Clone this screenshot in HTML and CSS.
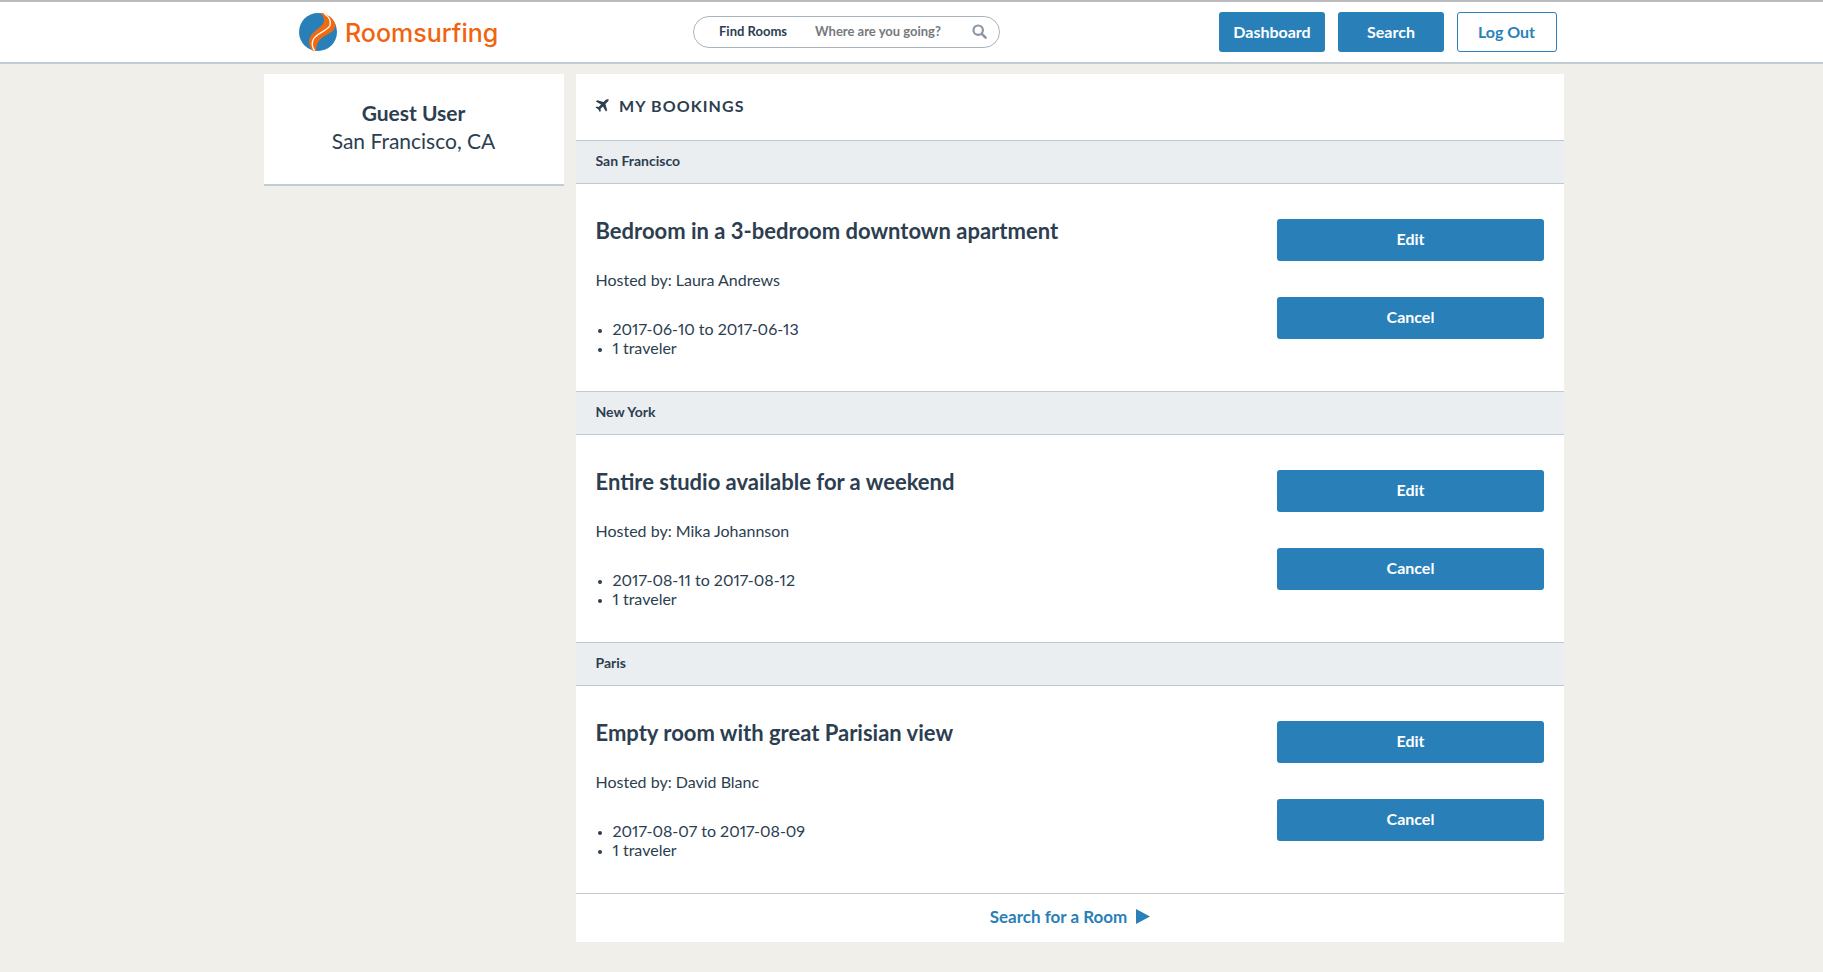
FILE: index.html
```html
<!DOCTYPE html>
<html lang="en">
<head>
<meta charset="utf-8">
<title>Roomsurfing</title>
<link rel="stylesheet" href="styles.css">
</head>
<body>
<header class="topbar">
  <div class="logo">
    <svg class="logo-mark" width="38" height="38" viewBox="0 0 38 38">
      <circle cx="19" cy="19" r="19" fill="#2980b9"/>
      <path d="M21 0C28 0.500 35 5 36.500 12C36.500 18 29 21 24 24C20 27 17 31 17 38L13.500 37.500C9.500 33 9 27 12 22.500C15 17.500 23.500 14 25 8.500C25.500 5 24 2 21 0Z" fill="#f26a10"/>
      <path d="M25.500 1C30 3.500 32.500 8.500 31 12.500C28.500 18 18.500 19.500 14.500 26C12.500 30 13 34 15.500 37.500" fill="none" stroke="#fff" stroke-width="1.3"/>
    </svg>
    <span class="logo-text">Roomsurfing</span>
  </div>
  <div class="search-pill">
    <span class="pill-label">Find Rooms</span>
    <span class="pill-placeholder">Where are you going?</span>
    <svg class="pill-icon" width="15" height="15" viewBox="0 0 15 15">
      <circle cx="6.2" cy="6.2" r="4.7" fill="none" stroke="#8a97a5" stroke-width="2.2"/>
      <path d="M9.8 9.8L13.6 13.6" stroke="#8a97a5" stroke-width="2.6" stroke-linecap="round"/>
    </svg>
  </div>
  <nav class="top-actions">
    <a class="btn btn-top">Dashboard</a>
    <a class="btn btn-top">Search</a>
    <a class="btn-outline">Log Out</a>
  </nav>
</header>
<div class="layout">
  <aside class="profile">
    <div class="profile-name">Guest User</div>
    <div class="profile-place">San Francisco, CA</div>
  </aside>
  <main class="bookings">
    <h1 class="bookings-title">
      <svg class="plane" width="14" height="14" viewBox="0 0 14 14">
        <path d="M13.6 0.5C12.7-0.1 11.4 0.2 10.5 1.1L8.6 3L2.2 1.2L0.9 2.5L6.1 5.4L3.7 7.9L1.6 7.6L0.6 8.6L3.2 10.2L4.8 12.9L5.8 11.9L5.500 9.8L8 7.4L10.9 12.6L12.2 11.3L10.4 4.9L12.4 2.9C13.3 2 13.9 1.3 13.6 0.5Z" fill="#2c3e50"/>
      </svg>
      MY BOOKINGS
    </h1>
    <section>
      <h2 class="city">San Francisco</h2>
      <div class="booking">
        <div class="booking-info">
          <h3 class="booking-title">Bedroom in a 3-bedroom downtown apartment</h3>
          <p class="host">Hosted by: Laura Andrews</p>
          <ul class="details"><li>2017-06-10 to 2017-06-13</li><li>1 traveler</li></ul>
        </div>
        <div class="booking-actions">
          <a class="btn btn-wide">Edit</a>
          <a class="btn btn-wide">Cancel</a>
        </div>
      </div>
    </section>
    <section>
      <h2 class="city">New York</h2>
      <div class="booking">
        <div class="booking-info">
          <h3 class="booking-title">Entire studio available for a weekend</h3>
          <p class="host">Hosted by: Mika Johannson</p>
          <ul class="details"><li>2017-08-11 to 2017-08-12</li><li>1 traveler</li></ul>
        </div>
        <div class="booking-actions">
          <a class="btn btn-wide">Edit</a>
          <a class="btn btn-wide">Cancel</a>
        </div>
      </div>
    </section>
    <section>
      <h2 class="city">Paris</h2>
      <div class="booking">
        <div class="booking-info">
          <h3 class="booking-title">Empty room with great Parisian view</h3>
          <p class="host">Hosted by: David Blanc</p>
          <ul class="details"><li>2017-08-07 to 2017-08-09</li><li>1 traveler</li></ul>
        </div>
        <div class="booking-actions">
          <a class="btn btn-wide">Edit</a>
          <a class="btn btn-wide">Cancel</a>
        </div>
      </div>
    </section>
    <a class="more">Search for a Room<svg class="more-arrow" width="14" height="15" viewBox="0 0 14 15"><path d="M0 0L14 7.500L0 15Z" fill="#2980b9"/></svg></a>
  </main>
</div>
</body>
</html>
```
FILE: styles.css
```css
* { box-sizing: border-box; }
html, body { margin: 0; padding: 0; }
body {
  height: 972px;
  overflow: hidden;
  background: #f0efea;
  color: #2c3e50;
  font-family: Lato, "Liberation Sans", sans-serif;
  font-size: 16px;
}
.topbar {
  height: 64px;
  background: #fff;
  border-top: 2px solid #b8babb;
  border-bottom: 2px solid #c1cdd5;
  display: flex;
  align-items: center;
  padding-left: 299px;
}
.logo { display: flex; align-items: center; width: 394px; }
.logo-mark { flex: none; }
.logo-text {
  margin-left: 8px;
  padding-top: 2px;
  font-family: Inter, sans-serif;
  font-size: 25px;
  font-weight: 500;
  color: #f0640f;
}
.search-pill {
  width: 307px;
  height: 32px;
  border: 1px solid #aab4bd;
  border-radius: 16px;
  display: flex;
  align-items: center;
  padding-left: 25px;
  font-size: 13px;
}
.pill-label { font-weight: 700; width: 96px; padding-bottom: 2px; }
.pill-placeholder { color: #76797c; font-weight: 700; width: 158px; padding-bottom: 2px; }
.pill-icon { flex: none; margin-bottom: 2px; margin-left: -1px; }
.top-actions { display: flex; gap: 13px; margin-left: 219px; }
.btn {
  display: flex;
  align-items: center;
  justify-content: center;
  background: #2980b9;
  color: #fff;
  font-weight: 700;
  border-radius: 3px;
  padding-bottom: 3px;
}
.btn-top { width: 106px; height: 40px; font-size: 16px; padding-bottom: 1px; }
.btn-outline {
  width: 100px;
  height: 40px;
  display: flex;
  align-items: center;
  justify-content: center;
  border: 1px solid #2980b9;
  border-radius: 3px;
  color: #2980b9;
  font-weight: 700;
  padding: 0 1px 1px 0;
}
.layout {
  display: flex;
  align-items: flex-start;
  gap: 12px;
  padding: 10px 0 0 264px;
}
.profile {
  width: 300px;
  height: 112px;
  background: #fff;
  border-bottom: 2px solid #c1cdd5;
  text-align: center;
  padding: 25px 1px 0 0;
  font-size: 21px;
  line-height: 28px;
}
.profile-name { font-weight: 700; }
.bookings { width: 988px; background: #fff; }
.bookings-title {
  margin: 0;
  height: 66px;
  display: flex;
  align-items: center;
  padding: 0 0 3px 19px;
  font-size: 16px;
  font-weight: 700;
  letter-spacing: 1.1px;
}
.plane { margin-right: 10px; }
.city {
  margin: 0;
  height: 44px;
  display: flex;
  align-items: center;
  padding: 0 0 3px 19.5px;
  background: #ebeef1;
  border-top: 1px solid #bfc9d1;
  border-bottom: 1px solid #bfc9d1;
  font-size: 14px;
  font-weight: 700;
}
.booking {
  height: 207px;
  display: flex;
  justify-content: space-between;
  padding: 34px 20px 0 19.5px;
}
.booking-title { margin: 0; font-size: 22px; line-height: 26px; font-weight: 700; }
.host { margin: 26px 0 0; line-height: 20px; }
.details { margin: 29px 0 0; padding-left: 17px; line-height: 19px; font-size: 16px; font-variant-numeric: proportional-nums; }
.details li::marker { font-size: 12px; }
.booking-actions { width: 267px; display: flex; flex-direction: column; gap: 36px; margin-top: 1px; }
.btn-wide { height: 42px; font-size: 16px; }
.more {
  height: 49px;
  border-top: 1px solid #bfc9d1;
  display: flex;
  align-items: center;
  justify-content: center;
  color: #2980b9;
  font-size: 17px;
  font-weight: 700;
  padding-bottom: 3px;
}
.more-arrow { margin-left: 9px; }
```
